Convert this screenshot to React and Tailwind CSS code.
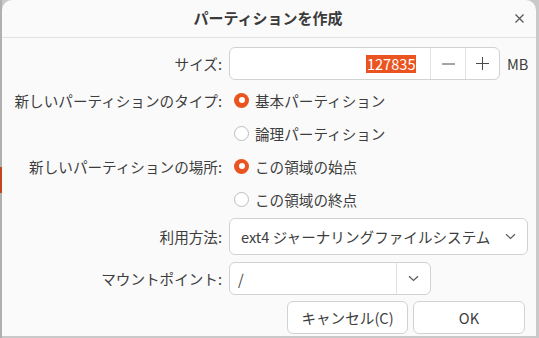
import React from "react";

const font = { fontFamily: '"Noto Sans CJK JP", "Noto Sans", sans-serif' };

const Chevron = () => (
  <svg width="11" height="7" viewBox="0 0 11 7" fill="none">
    <path d="M1 1.2 L5.5 5.5 L10 1.2" stroke="#5a5a5a" strokeWidth="1.2" />
  </svg>
);

const Radio = ({ checked }) =>
  checked ? (
    <span className="w-[15px] h-[15px] rounded-full bg-[#e95420] flex items-center justify-center shrink-0">
      <span className="w-[6px] h-[6px] rounded-full bg-white" />
    </span>
  ) : (
    <span className="w-[15px] h-[15px] rounded-full bg-white border border-[#bdbdbd] shrink-0" />
  );

const Row = ({ label, className = "", children }) => (
  <div className={`flex items-center ${className}`}>
    <div className="w-[221px] shrink-0 text-right pr-[1px]">{label}</div>
    <div className="ml-[6px] flex items-center h-full">{children}</div>
  </div>
);

const RadioItem = ({ checked, text }) => (
  <div className="flex items-center gap-[6px] ml-[5px]">
    <Radio checked={checked} />
    <span>{text}</span>
  </div>
);

export default function App() {
  return (
    <div
      className="w-[539px] h-[338px] bg-[#c9c9c9] flex overflow-hidden text-[14.6px] text-[#3d3d3d]"
      style={font}
    >
      <div className="w-[2px] shrink-0 bg-[#b0b0b0]">
        <div className="mt-[167px] h-[26px] bg-[#c4461c]" />
      </div>
      <div className="w-[534px] h-[336px] bg-[#fafafa] rounded-t-[10px] flex flex-col">
        {/* header */}
        <div className="h-[38px] shrink-0 border-b border-[#e2e2e2] flex items-center">
          <div className="flex-1 text-center font-bold text-[15px] text-[#3a3a3a] pl-[30px]">
            パーティションを作成
          </div>
          <div className="w-[30px] mr-[2px] flex items-center justify-center">
            <svg width="9" height="9" viewBox="0 0 9 9">
              <path d="M0.5 0.5 L8.5 8.5 M8.5 0.5 L0.5 8.5" stroke="#555" strokeWidth="1.2" />
            </svg>
          </div>
        </div>

        <div className="flex flex-col pt-[9px]">
          <Row label="サイズ:" className="h-[33px]">
            <div className="flex h-[33px] w-[271px] border border-[#d2d2d2] rounded-[6px] bg-white">
              <div className="w-[201px] flex items-center justify-end pr-[14px] border-r border-[#e2e2e2]">
                <span className="bg-[#e95420] text-white leading-[18px] px-[0.5px]">127835</span>
              </div>
              <div className="w-[35px] flex items-center justify-center border-r border-[#e2e2e2]">
                <svg width="13" height="2" viewBox="0 0 13 2">
                  <path d="M0 1 H13" stroke="#4a4a4a" strokeWidth="1" />
                </svg>
              </div>
              <div className="flex-1 flex items-center justify-center">
                <svg width="13" height="13" viewBox="0 0 13 13">
                  <path d="M0 6.5 H13 M6.5 0 V13" stroke="#4a4a4a" strokeWidth="1" />
                </svg>
              </div>
            </div>
            <span className="ml-[7px]">MB</span>
          </Row>

          <Row label="新しいパーティションのタイプ:" className="h-[33px] mt-[4px]">
            <RadioItem checked text="基本パーティション" />
          </Row>
          <Row label="" className="h-[33px]">
            <RadioItem text="論理パーティション" />
          </Row>
          <Row label="新しいパーティションの場所:" className="h-[33px]">
            <RadioItem checked text="この領域の始点" />
          </Row>
          <Row label="" className="h-[33px]">
            <RadioItem text="この領域の終点" />
          </Row>

          <Row label="利用方法:" className="h-[37px] mt-[2px]">
            <div className="w-[299px] h-[37px] border border-[#d2d2d2] rounded-[6px] bg-white flex items-center pl-[11px] pr-[11px]">
              <span className="flex-1">ext4 ジャーナリングファイルシステム</span>
              <Chevron />
            </div>
          </Row>

          <Row label="マウントポイント:" className="h-[33px] mt-[7px]">
            <div className="w-[202px] h-[33px] border border-[#d2d2d2] rounded-[6px] bg-white flex">
              <div className="w-[167px] border-r border-[#e2e2e2] flex items-center pl-[8px]">/</div>
              <div className="flex-1 flex items-center justify-center">
                <Chevron />
              </div>
            </div>
          </Row>

          <div className="flex justify-end gap-[5px] pr-[11px] mt-[6px]">
            <button className="w-[121px] h-[33px] border border-[#d2d2d2] rounded-[6px] bg-white">
              キャンセル(C)
            </button>
            <button className="w-[112px] h-[33px] border border-[#d2d2d2] rounded-[6px] bg-white">
              OK
            </button>
          </div>
        </div>
      </div>
    </div>
  );
}
